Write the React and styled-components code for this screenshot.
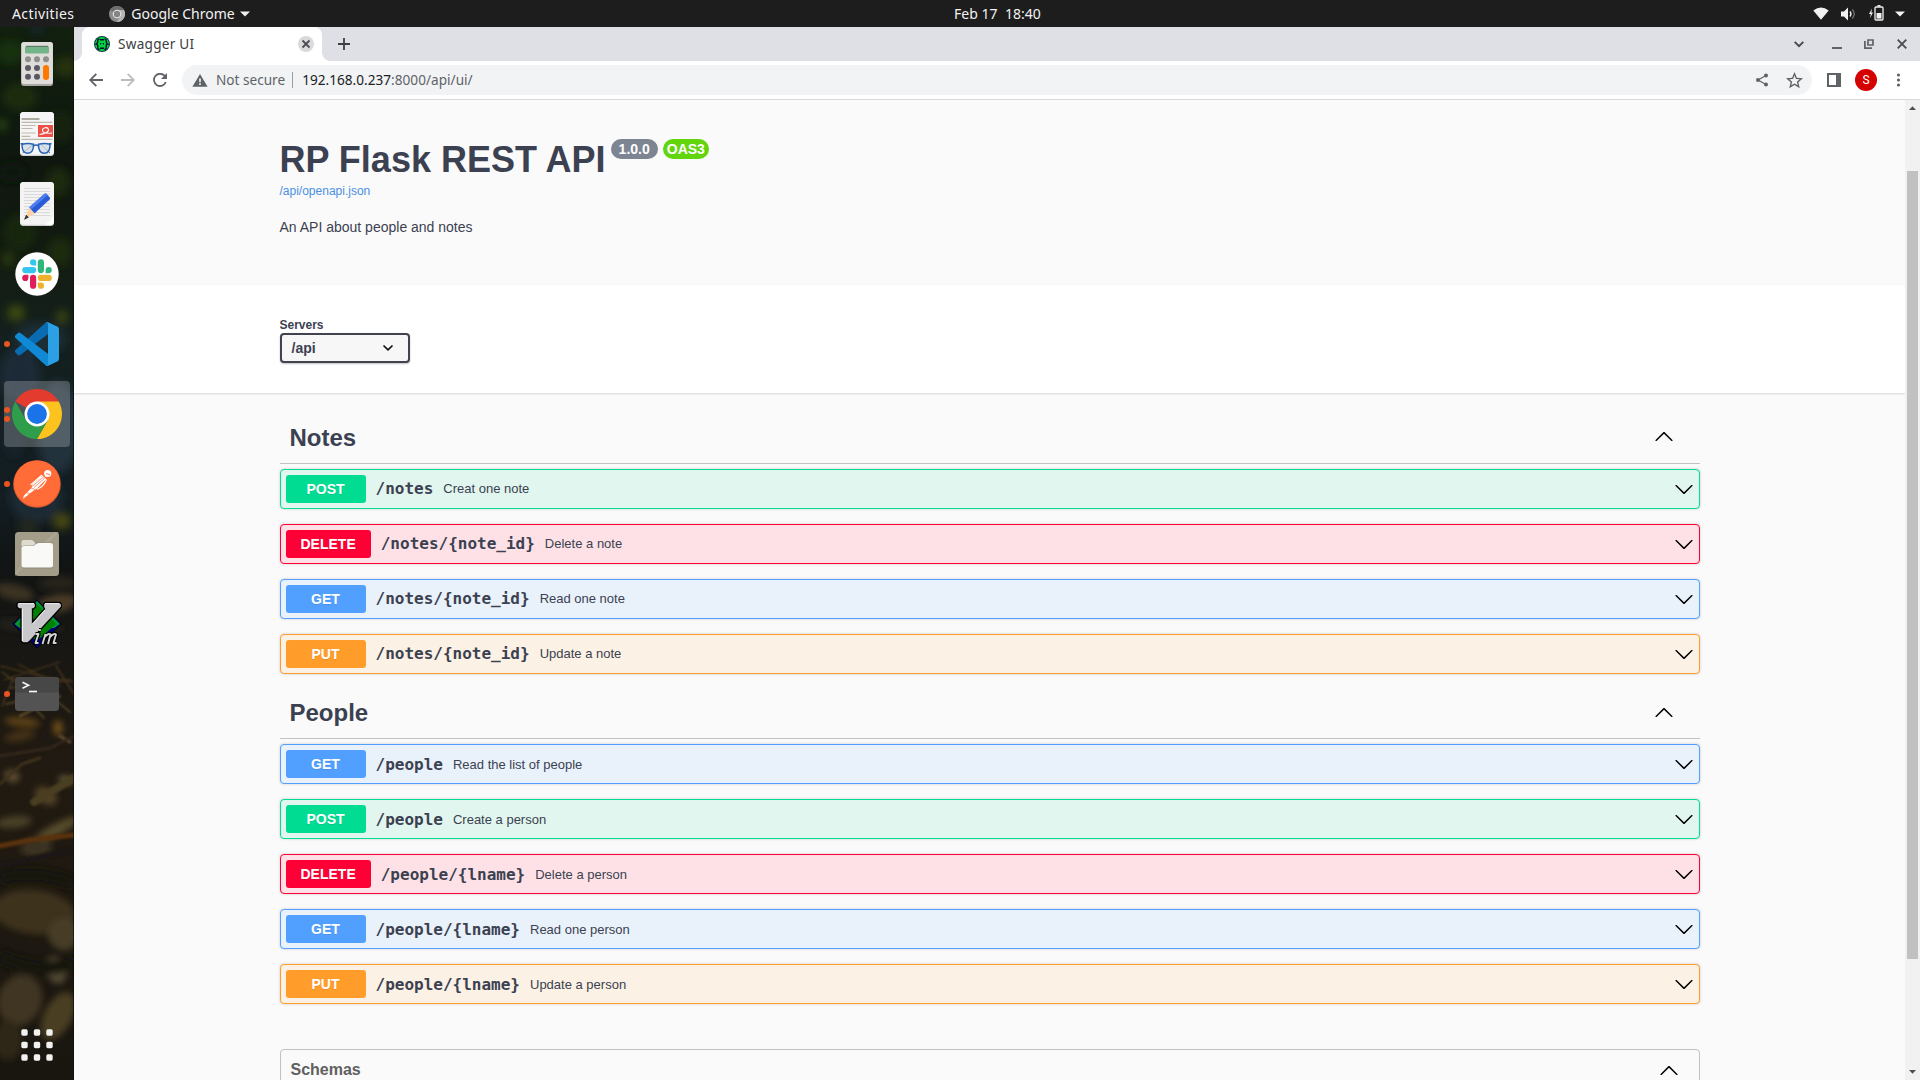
import React from 'react';
import styled, { createGlobalStyle, css } from 'styled-components';

const GlobalStyle = createGlobalStyle`
  * { box-sizing: border-box; }
  html, body { margin: 0; padding: 0; overflow: hidden; }
  body { font-family: "Liberation Sans", Arial, sans-serif; color: #3b4151; }
`;

const uiFont = css`font-family: "Noto Sans", "Open Sans", sans-serif;`;

const Screen = styled.div`
  width: 1920px;
  height: 1080px;
  display: flex;
  flex-direction: column;
  overflow: hidden;
  background: #fafafa;
`;

/* ---------- desktop top bar ---------- */
const TopBar = styled.header`
  height: 27px;
  flex: none;
  display: grid;
  grid-template-columns: 942px auto 1fr;
  align-items: center;
  background: #1d1d1d;
  color: #f2f2f2;
  padding: 0 15px 0 12px;
  ${uiFont}
  font-size: 14px;
  line-height: 26px;
  white-space: pre;
`;
const BarGroup = styled.div`
  display: flex;
  align-items: center;
  justify-content: ${p => (p.$end ? 'flex-end' : 'flex-start')};
`;
const BarText = styled.span`
  letter-spacing: ${p => p.$ls || 0}px;
  margin-left: ${p => p.$ml || 0}px;
`;
const Glyph = styled.svg`
  display: block;
  flex: none;
  margin-left: ${p => p.$ml || 0}px;
  margin-top: ${p => p.$mt || 0}px;
  margin-bottom: ${p => p.$mb || 0}px;
`;

const Desktop = styled.div`
  flex: 1;
  min-height: 0;
  display: flex;
`;

/* ---------- dock ---------- */
const Dock = styled.nav`
  position: relative;
  width: 74px;
  flex: none;
  display: flex;
  flex-direction: column;
  align-items: center;
  gap: 4px;
  padding: 4px 0 2px;
  background: #15180f;
  overflow: hidden;
`;
const Wallpaper = styled.svg`
  position: absolute;
  inset: 0;
`;
const DockItem = styled.div`
  position: relative;
  width: 66px;
  height: 66px;
  flex: none;
  display: flex;
  align-items: center;
  justify-content: center;
  border-radius: 4px;
  background: ${p => (p.$active ? 'rgba(255,255,255,0.22)' : 'transparent')};
  margin-top: ${p => (p.$last ? 'auto' : 0)};
`;
const Running = styled.div`
  position: absolute;
  left: 0;
  top: 0;
  bottom: 0;
  display: flex;
  flex-direction: column;
  justify-content: center;
  gap: 3px;
`;
const RunDot = styled.i`
  width: 6px;
  height: 6px;
  border-radius: 50%;
  background: #e95420;
`;

/* ---------- browser chrome ---------- */
const Browser = styled.main`
  flex: 1;
  min-width: 0;
  display: flex;
  flex-direction: column;
`;
const TabStrip = styled.div`
  height: 34px;
  flex: none;
  display: flex;
  align-items: center;
  background: #dee0e5;
  padding: 0 13px 0 8px;
`;
const Tab = styled.div`
  position: relative;
  width: 240px;
  height: 34px;
  display: flex;
  align-items: center;
  background: #fff;
  border-radius: 8px 8px 0 0;
  padding: 0 8px 0 12px;
  &::before, &::after {
    content: "";
    position: absolute;
    bottom: 0;
    width: 8px;
    height: 8px;
  }
  &::before { left: -8px; background: radial-gradient(circle at 0 0, #dee0e5 7.5px, #fff 8px); }
  &::after { right: -8px; background: radial-gradient(circle at 100% 0, #dee0e5 7.5px, #fff 8px); }
`;
const TabTitle = styled.span`
  flex: 1;
  margin-left: 8px;
  padding-bottom: 2px;
  ${uiFont}
  font-size: 13.6px;
  letter-spacing: ${p => p.$ls || 0}px;
  color: #3c4043;
`;
const CloseButton = styled.span`
  width: 16px;
  height: 16px;
  border-radius: 50%;
  background: #dadada;
  display: flex;
`;
const Spacer = styled.div`flex: 1;`;

const Toolbar = styled.div`
  height: 39px;
  flex: none;
  display: flex;
  align-items: center;
  background: #fff;
  border-bottom: 1px solid #d8dade;
  padding: 0 12px 0 10px;
`;
const NavButton = styled.span`
  width: 24px;
  height: 24px;
  margin-right: 8px;
  display: flex;
  align-items: center;
  justify-content: center;
`;
const Omnibox = styled.div`
  flex: 1;
  height: 30px;
  margin-left: 2px;
  border-radius: 15px;
  background: #f1f3f4;
  display: flex;
  align-items: center;
  padding: 0 8px 0 10px;
  ${uiFont}
  font-size: 13.6px;
  color: #5f6368;
`;
const Divider = styled.span`
  width: 1px;
  height: 16px;
  background: #9a9da1;
  margin: 0 9px 0 7px;
`;
const Url = styled.span`
  letter-spacing: ${p => p.$ls || 0}px;
  padding-bottom: 2px;
  b { font-weight: 400; color: #202124; }
`;
const Warn = styled.span`
  padding-bottom: 2px;
  margin-left: 8px;
`;
const Avatar = styled.span`
  width: 22px;
  height: 22px;
  border-radius: 50%;
  margin-left: 14px;
  background: #d50000;
  color: #fff;
  font-family: Roboto, sans-serif;
  font-size: 12px;
  line-height: 22px;
  text-align: center;
`;

/* ---------- page ---------- */
const Viewport = styled.div`
  flex: 1;
  min-height: 0;
  display: flex;
`;
const Page = styled.div`
  flex: 1;
  overflow: hidden;
  background: #fafafa;
`;
const Wrapper = styled.div`
  width: 1460px;
  margin: 0 auto;
  padding: 0 20px;
`;
const Info = styled.section`
  height: 185px;
  padding-top: 38px;
`;
const TitleRow = styled.div`
  display: flex;
  align-items: flex-start;
  height: 44px;
`;
const Title = styled.h2`
  margin: 0;
  font-size: 36px;
  line-height: 44px;
  font-weight: 700;
  color: #3b4151;
`;
const Badge = styled.span`
  margin: 1px 0 0 5px;
  height: 20px;
  line-height: 20px;
  padding: 0 ${p => p.$px}px;
  border-radius: 10px;
  background: ${p => p.$bg};
  color: #fff;
  font-size: 14px;
  font-weight: 700;
`;
const SpecLink = styled.a`
  display: block;
  font-size: 12px;
  line-height: 18px;
  color: #4990e2;
`;
const Description = styled.p`
  margin: 18px 0 0;
  font-size: 14px;
  line-height: 18px;
  color: #3b4151;
`;
const SchemeBar = styled.section`
  position: relative;
  height: 108px;
  padding-top: 33px;
  background: #fff;
  box-shadow: 0 1px 2px 0 rgba(0, 0, 0, 0.15);
`;
const ServersLabel = styled.label`
  display: block;
  font-size: 12px;
  font-weight: 700;
  line-height: 15px;
`;
const Select = styled.div`
  width: 130px;
  height: 30px;
  display: flex;
  align-items: center;
  justify-content: space-between;
  padding: 0 14px 0 10px;
  border: 2px solid #41444e;
  border-radius: 4px;
  background: #f7f7f7;
  box-shadow: 0 1px 2px 0 rgba(0, 0, 0, 0.25);
  font-size: 14px;
  font-weight: 700;
`;
const Operations = styled.div`padding-top: 21px;`;
const TagHeader = styled.h3`
  height: 50px;
  margin: 0 0 5px;
  padding: 0 26px 2px 10px;
  display: flex;
  align-items: center;
  justify-content: space-between;
  border-bottom: 1px solid rgba(59, 65, 81, 0.3);
  font-size: 24px;
  font-weight: 700;
`;
const OpRow = styled.div`
  height: 40px;
  margin-bottom: 15px;
  display: flex;
  align-items: center;
  padding: 0 5px;
  border: 1px solid ${p => p.$c};
  border-radius: 4px;
  background: ${p => p.$bg};
  box-shadow: 0 0 3px rgba(0, 0, 0, 0.19);
`;
const Method = styled.span`
  min-width: 80px;
  height: 28px;
  line-height: 28px;
  padding: 0 15px;
  border-radius: 3px;
  background: ${p => p.$c};
  color: #fff;
  font-size: 14px;
  font-weight: 700;
  text-align: center;
  text-shadow: 0 1px 0 rgba(0, 0, 0, 0.1);
`;
const Path = styled.span`
  padding: 0 10px ${p => p.$lift}px;
  font-family: "DejaVu Sans Mono", monospace;
  font-size: 16px;
  font-weight: 700;
`;
const Summary = styled.span`
  flex: 1;
  padding-bottom: ${p => p.$lift}px;
  font-size: 13px;
`;
const Schemas = styled.section`
  height: 60px;
  margin-top: 45px;
  padding: 10px 20px 0 10px;
  display: flex;
  align-items: flex-start;
  justify-content: space-between;
  border: 1px solid rgba(59, 65, 81, 0.3);
  border-radius: 4px;
`;
const SchemasTitle = styled.h4`
  margin: 0;
  font-size: 16px;
  line-height: 20px;
  color: #606060;
`;
const Scrollbar = styled.div`
  width: 15px;
  flex: none;
  display: flex;
  flex-direction: column;
  align-items: center;
  justify-content: space-between;
  background: #f1f1f1;
`;
const Thumb = styled.div`
  width: 11px;
  height: 788px;
  margin: 61px 0 auto;
  background: #c1c1c1;
`;

/* ---------- drawings ---------- */
const Chevron = ({ up, mt }) => (
  <Glyph width="20" height="20" viewBox="0 0 20 20" $mt={mt}>
    <path d={up
      ? 'M17.418 14.908c.272.268.709.268.979 0s.271-.701 0-.969l-7.908-7.83c-.27-.268-.707-.268-.979 0l-7.908 7.83c-.27.268-.27.701 0 .969s.709.268.979 0L10 7.767z'
      : 'M17.418 6.109c.272-.268.709-.268.979 0s.271.701 0 .969l-7.908 7.83c-.27.268-.707.268-.979 0l-7.908-7.83c-.27-.268-.27-.701 0-.969s.709-.268.979 0L10 13.25z'} />
  </Glyph>
);

const leaves = [
  [37, 2, 8, 3, '#16283d'], [10, 25, 14, 12, '#17300f'], [66, 40, 12, 10, '#26330d'], [20, 70, 18, 14, '#1a2c10'],
  [2, 98, 5, 6, '#274a12'], [60, 100, 14, 16, '#15220f'], [12, 145, 14, 10, '#10180d'], [58, 155, 12, 14, '#1b2a10'],
  [20, 205, 16, 18, '#182610'], [60, 225, 12, 14, '#1f2c10'], [8, 232, 6, 8, '#28380e'], [16, 286, 9, 8, '#3d4a10'],
  [62, 290, 6, 7, '#3a4410'], [40, 312, 26, 16, '#1c2d35'], [20, 350, 20, 30, '#1c2c37'], [58, 400, 22, 46, '#22333e'],
  [14, 400, 12, 30, '#16222b'], [36, 470, 26, 26, '#1d2c35'], [62, 494, 9, 8, '#4a4a10'], [28, 500, 10, 10, '#20261a'],
  [58, 556, 20, 6, '#2c261c'],
];
const ground = [
  [14, 592, 20, 8, '#3b3021', 12], [56, 604, 22, 9, '#493a28', -12], [30, 626, 34, 6, '#22231c', 5],
  [22, 722, 18, 5, '#5a4018', 6], [58, 728, 5, 8, '#6a4c18', 0], [20, 736, 16, 5, '#453117', -10],
  [12, 776, 8, 6, '#5c4b30', 20], [46, 796, 12, 8, '#514226', 30], [66, 780, 8, 4, '#65583c', 10],
  [14, 822, 18, 6, '#4a4028', -6], [56, 830, 26, 6, '#564b2c', -28], [36, 848, 16, 10, '#3b3320', 0],
  [34, 912, 42, 22, '#3e331f', 6], [64, 934, 16, 16, '#473d26', 0], [20, 1000, 22, 26, '#3f3420', 20],
  [56, 970, 10, 14, '#524a32', -20], [58, 1016, 14, 26, '#4a3d20', 28], [8, 1040, 14, 20, '#2f2818', 0],
];
const twigs = [
  ['M0 666L40 676L74 682', '#54401f', 1], ['M4 680L60 662', '#3d2f1c', 1.4], ['M18 664L60 686', '#6a4a20', 0.8],
  ['M2 672L34 696', '#51401f', 1.5], ['M10 688L70 680', '#4b3820', 1.6], ['M6 704L48 694L70 712', '#5e4b2c', 1.6],
  ['M20 716L60 696', '#65502f', 2], ['M14 676L2 706', '#4f3c22', 1.2], ['M56 666L74 694', '#463620', 1.5],
  ['M30 704L44 718', '#5d4a2c', 1.5], ['M60 736L70 742', '#5b4c32', 3], ['M0 756L50 748L74 736', '#34271a', 3],
  ['M34 802L74 778', '#4a3c20', 8], ['M0 866L74 850', '#1a1712', 6], ['M0 846L30 840L74 835', '#5a300a', 5],
  ['M0 784L22 764L40 758', '#40331c', 3],
];
const DockWallpaper = () => (
  <Wallpaper width="74" height="1053" viewBox="0 0 74 1053">
    <defs>
      <linearGradient id="night" x1="0" y1="0" x2="0" y2="1">
        <stop offset="0" stopColor="#12200f" />
        <stop offset=".13" stopColor="#0f170f" />
        <stop offset=".22" stopColor="#131c11" />
        <stop offset=".3" stopColor="#14201f" />
        <stop offset=".45" stopColor="#131d22" />
        <stop offset=".51" stopColor="#111414" />
        <stop offset=".6" stopColor="#191713" />
        <stop offset=".72" stopColor="#211a11" />
        <stop offset="1" stopColor="#191610" />
      </linearGradient>
      <filter id="soft" x="-50%" y="-50%" width="200%" height="200%"><feGaussianBlur stdDeviation="4" /></filter>
      <filter id="near" x="-50%" y="-50%" width="200%" height="200%"><feGaussianBlur stdDeviation="3.4" /></filter>
      <filter id="fine" x="-10%" y="-10%" width="120%" height="120%"><feGaussianBlur stdDeviation=".9" /></filter>
    </defs>
    <rect width="74" height="1053" fill="url(#night)" />
    <g filter="url(#soft)">
      {leaves.map(([x, y, rx, ry, c], i) => <ellipse key={i} cx={x} cy={y} rx={rx} ry={ry} fill={c} />)}
    </g>
    <g transform="translate(0 -27)">
      <g filter="url(#near)">
        {ground.map(([x, y, rx, ry, c, r], i) => (
          <ellipse key={i} cx={x} cy={y} rx={rx} ry={ry} fill={c} transform={`rotate(${r} ${x} ${y})`} />
        ))}
        <path d="M0 878Q40 870 74 884M0 956Q40 976 74 962" stroke="#13120f" strokeWidth="14" fill="none" />
      </g>
      <g filter="url(#fine)" fill="none">
        {twigs.map(([d, c, w], i) => <path key={i} d={d} stroke={c} strokeWidth={w} strokeLinecap="round" />)}
      </g>
    </g>
    <path d="M73.5 0V1053" stroke="#0c0d0a" strokeOpacity=".7" />
  </Wallpaper>
);

const Calculator = () => (
  <svg width="34" height="46" viewBox="0 0 34 46">
    <rect x="1.300" y="1.500" width="31.600" height="43.500" rx="2.500" fill="#aaa7a2" />
    <rect x="1.300" y="1" width="31.600" height="42" rx="2.500" fill="#deddda" />
    <rect x="5" y="5" width="24" height="7.500" rx="1.500" fill="#73b488" />
    <path d="M6 5.300h22" stroke="#5b6f62" />
    <g fill="#8f8e8c"><circle cx="8" cy="18.300" r="3" /><circle cx="17" cy="18.300" r="3" /><circle cx="26" cy="18.300" r="3" /></g>
    <g fill="#5b5866"><circle cx="8" cy="27" r="3" /><circle cx="17" cy="27" r="3" /><circle cx="8" cy="35.700" r="3" /><circle cx="17" cy="35.700" r="3" /></g>
    <rect x="23" y="24" width="6" height="15" rx="3" fill="#ff7800" />
  </svg>
);
const DocumentViewer = () => (
  <svg width="34" height="44" viewBox="0 0 34 44">
    <rect width="34" height="44" rx="3.500" fill="#d2d2d2" />
    <rect width="34" height="42.800" rx="3.500" fill="#f5f5f5" />
    <path d="M1.500 7h18" stroke="#9b978a" strokeWidth="1.600" />
    <path d="M1.500 10.300h31M1.500 13.500h14M1.500 16.500h11M1.500 21h14M1.500 24.300h9M1.500 27.300h31" stroke="#bdb9ab" strokeWidth="1.200" />
    <rect x="18" y="13" width="15" height="12" fill="#ed5044" />
    <path d="M19.500 22.500c3-.5 9.500-2 9-5s-6.500-2-6 1 5 3 9.500 2.500" stroke="#fff" strokeWidth="1.100" fill="none" />
    <path d="M2.500 41l11-8.500M30 41l-9-8.500" stroke="#454b52" strokeWidth=".8" />
    <g fill="#c9d9e6" fillOpacity=".7" stroke="#2b63b4" strokeWidth="1.500">
      <path d="M2 32.300q6-1.500 11.500 0 .3 8.700-5.700 8.900T2 32.300zM18.500 32.300q6-1.500 11.500 0 .3 8.900-5.700 8.900t-5.800-8.900z" />
      <path d="M.6 31.800h3M13.500 34q2.500-1.800 5 0M29 31.800h2.500" fill="none" />
    </g>
  </svg>
);
const TextEditor = () => (
  <svg width="34" height="44" viewBox="0 0 34 44">
    <rect width="34" height="44" rx="3.500" fill="#cdcdcd" />
    <rect width="34" height="42.800" rx="3.500" fill="#f3f3f3" />
    <path d="M4 6.500h26M4 9.500h26M4 12.500h26M4 15.500h26M4 18.500h26M4 21.500h26M4 24.500h26M4 27.500h26M4 30.500h26M4 33.500h26" stroke="#dadada" />
    <path d="M24.500 11.800q1-.8 2 0l3.300 3.800q.6 1-.2 1.900L14.500 31.500l-5.500-6z" fill="#2a5bd7" />
    <path d="M24.500 11.800q1-.8 2 0l1.200 1.400L11 27.500l-2-2z" fill="#4b7ff0" />
    <path d="M9 25.500l5.500 6-10 6.300z" fill="#ffd0a6" />
    <path d="M6.200 32.800l2.600 2.600-4.800 2.300z" fill="#303030" />
    <path d="M33.500 33q-2 6-9 9.700h6.200q2.800-.2 2.800-3z" fill="#fff" />
  </svg>
);
const Slack = () => (
  <svg width="44" height="44" viewBox="0 0 44 44">
    <circle cx="22" cy="22" r="21.700" fill="#fff" />
    <g fill="#36c5f0"><path d="M21.200 13.400h-3.100a3.100 3.100 0 1 1 3.100-3.100z" /><rect x="7.200" y="15" width="14" height="6.200" rx="3.100" /></g>
    <g fill="#2eb67d"><path d="M30.600 21.200v-3.100a3.100 3.100 0 1 1 3.100 3.100z" /><rect x="22.800" y="7.200" width="6.200" height="14" rx="3.100" /></g>
    <g fill="#ecb22e"><path d="M22.800 30.600h3.100a3.100 3.100 0 1 1-3.100 3.100z" /><rect x="22.800" y="22.800" width="14" height="6.200" rx="3.100" /></g>
    <g fill="#e01e5a"><path d="M13.400 22.800v3.100a3.100 3.100 0 1 1-3.100-3.100z" /><rect x="15" y="22.800" width="6.200" height="14" rx="3.100" /></g>
  </svg>
);
const VSCode = () => (
  <svg width="44" height="44" viewBox="0 0 100 100">
    <path d="M96.460 10.796L75.857.876a6.230 6.230 0 0 0-7.107 1.207L1.300 63.583a4.167 4.167 0 0 0 .004 6.162l5.510 5.009a4.167 4.167 0 0 0 5.320.236l81.228-61.620c2.725-2.067 6.639-.124 6.639 3.297v-.240a6.250 6.250 0 0 0-3.540-5.630z" fill="#0a6cb0" />
    <path d="M96.460 89.204l-20.603 9.920a6.230 6.230 0 0 1-7.107-1.207L1.300 36.417a4.167 4.167 0 0 1 .004-6.162l5.510-5.009a4.167 4.167 0 0 1 5.320-.236l81.228 61.620c2.725 2.067 6.639.124 6.639-3.297v.240a6.250 6.250 0 0 1-3.540 5.630z" fill="#108ad4" />
    <path d="M75.858 99.126a6.232 6.232 0 0 1-7.108-1.210c2.306 2.307 6.250.674 6.250-2.588V4.672c0-3.262-3.944-4.895-6.250-2.589a6.232 6.232 0 0 1 7.108-1.210l20.600 9.908A6.250 6.250 0 0 1 100 16.413v67.174a6.250 6.250 0 0 1-3.541 5.633z" fill="#2ba0e4" />
  </svg>
);
const Chrome = () => (
  <svg width="50" height="50" viewBox="0 0 50 50">
    <path d="M25 25L3.350 12.500A25 25 0 0 1 46.650 12.500z" fill="#e33b2e" />
    <path d="M25 12.500H46.650A25 25 0 0 1 25 50L35.800 31.300z" fill="#fcc31e" />
    <path d="M35.800 31.300L25 50A25 25 0 0 1 3.350 12.500L14.200 31.300z" fill="#2f9e4b" />
    <circle cx="25" cy="25" r="12.500" fill="#fff" />
    <circle cx="25" cy="25" r="9.900" fill="#1a73e8" />
  </svg>
);
const Postman = () => (
  <svg width="48" height="48" viewBox="0 0 48 48">
    <circle cx="24" cy="24" r="23.800" fill="#e05a2b" /><circle cx="24" cy="23.500" r="23" fill="#ff6c37" />
    <circle cx="34.700" cy="13.500" r="3.600" fill="#fff" />
    <path d="M33 13.500l4 1.200" stroke="#ff6c37" strokeWidth=".9" />
    <path d="M29.500 15.500l3.800 3.500-9.300 9.500-4 2.500-9.500 7.500H10l1-3 7.500-7.500 1-4z" fill="#fff" />
    <path d="M19 26.500L31 16.500M21 27.500l11-9.500M18 28l4 1.500M14 33l3 .5" stroke="#ff6c37" strokeWidth=".7" />
    <path d="M17.500 25L29 15M24 29.500q7-3 9.500-10" stroke="#fff" strokeWidth="1.100" fill="none" />
  </svg>
);
const Files = () => (
  <svg width="44" height="44" viewBox="0 0 44 44">
    <rect width="44" height="44" rx="3.500" fill="#a29c89" />
    <path d="M44 0L0 44V40L40 0z" fill="#b1ab98" opacity=".6" />
    <path d="M6.500 14v-3.500q0-2.500 2.500-2.500h7q2 0 3 1.500l2 3h14.500v6z" fill="#dfdccf" />
    <path d="M6.500 16q0-2.500 2.500-2.500h8q2 0 3.500-2t3-1h12q2.500 0 2.500 2.500V34q0 2.500-2.500 2.500H9q-2.500 0-2.500-2.500z" fill="#8a8473" opacity=".7" />
    <path d="M6.500 16q0-2 2.500-2h8q2 0 3.500-1.500t3-1.500h12q2.500 0 2.500 2.500V33q0 2.500-2.500 2.500H9q-2.500 0-2.500-2.500z" fill="#f9f9f8" />
  </svg>
);
const Vim = () => (
  <svg width="50" height="50" viewBox="0 0 50 50">
    <path d="M25 .8L49.200 25 25 49.200.8 25z" fill="#00007a" stroke="#000" />
    <path d="M25 2L48 25 42 29H25v13L2.500 25z" fill="#019833" />
    <path d="M25 5L44 25 25 42 6 25z" fill="#008000" />
    <path d="M6 3.500h16l1.500 1.500v3l-2 2h-1v13L32.500 10 31.500 8V5L33 3.500H48L49.500 5v3L18 42l-2.500 2H11l-2-2V10H7L5 8V5z" fill="#c8c7ca" stroke="#000" strokeWidth="1.300" />
    <path d="M6.500 4.600h15.500M33 4.600H47M10.500 10v32M20.500 25L33 11" stroke="#efeff1" strokeWidth="1" fill="none" />
    <g fill="none" stroke="#000" strokeWidth="4.200" strokeLinejoin="round"><path d="M23.500 35h3l-3 9h3M27 31h1.800M30.500 45l3-10M32.500 38q4.500-4.500 6-2.500L36 45M38 38q4.500-4.500 6-2.500L41.500 44h3" /></g>
    <g fill="none" stroke="#d4d4d6" strokeWidth="1.900" strokeLinejoin="round"><path d="M23.500 35h3l-3 9h3M27 31h1.800M30.500 45l3-10M32.500 38q4.500-4.500 6-2.500L36 45M38 38q4.500-4.500 6-2.500L41.500 44h3" /></g>
  </svg>
);
const Terminal = () => (
  <svg width="44" height="34" viewBox="0 0 44 34">
    <rect width="44" height="34" rx="3.500" fill="#535353" />
    <path d="M3.500 0h37Q44 0 44 3.500V15.500H0V3.500Q0 0 3.500 0z" fill="#474747" />
    <path d="M7.500 5.300l6 3-6 3" stroke="#f4f4f4" strokeWidth="1.700" fill="none" /><path d="M14 14.500h8" stroke="#fff" strokeWidth="1.600" />
  </svg>
);
const AppGrid = () => (
  <svg width="32" height="32" viewBox="0 0 32 32" fill="#f2f2f0">
    {[0, 12.5, 25].map(y => [0, 12.5, 25].map(x => <rect key={`${x}-${y}`} x={x + 0.3} y={y + 0.3} width="6.400" height="6.400" rx="1.600" />))}
  </svg>
);

const dockApps = [
  [Calculator, 0], [DocumentViewer, 0], [TextEditor, 0], [Slack, 0], [VSCode, 1],
  [Chrome, 2], [Postman, 1], [Files, 0], [Vim, 0], [Terminal, 1],
];

const methods = {
  POST: ['#00dc91', '#e1f6ee'],
  DELETE: ['#ff0036', '#fde1e6'],
  GET: ['#519fff', '#e9f1fb'],
  PUT: ['#ff9c2a', '#fbf1e4'],
};
const tags = [
  { name: 'Notes', lift: 2, chevron: -3, ops: [
    ['POST', '/notes', 'Creat one note'],
    ['DELETE', '/notes/{note_id}', 'Delete a note'],
    ['GET', '/notes/{note_id}', 'Read one note'],
    ['PUT', '/notes/{note_id}', 'Update a note'],
  ] },
  { name: 'People', lift: 0, chevron: -1, ops: [
    ['GET', '/people', 'Read the list of people'],
    ['POST', '/people', 'Create a person'],
    ['DELETE', '/people/{lname}', 'Delete a person'],
    ['GET', '/people/{lname}', 'Read one person'],
    ['PUT', '/people/{lname}', 'Update a person'],
  ] },
];

const Cross = ({ s, w }) => <path d={`M${-s} ${-s}L${s} ${s}M${s} ${-s}L${-s} ${s}`} stroke="#4a4d51" strokeWidth={w} />;

export default function App() {
  return (
    <Screen>
      <GlobalStyle />
      <TopBar>
        <BarGroup>
          <BarText $ls={0.4}>Activities</BarText>
          <Glyph width="16" height="16" viewBox="0 0 16 16" $ml={35}>
            <circle cx="8" cy="8" r="8" fill="#8c8c8c" />
            <path d="M8 8L1.100 4A8 8 0 0 1 15 4z" fill="#6d6d6d" />
            <path d="M8 4H15A8 8 0 0 1 8 16L11.500 10z" fill="#b5b5b5" />
            <circle cx="8" cy="8" r="4.300" fill="#e6e6e6" /><circle cx="8" cy="8" r="3.200" fill="#858585" />
          </Glyph>
          <BarText $ml={6}>Google Chrome</BarText>
          <Glyph width="10" height="6" viewBox="0 0 10 6" $ml={5}><path d="M0 .5h10L5 5.500z" fill="#f2f2f2" /></Glyph>
        </BarGroup>
        <BarText $ls={0.03}>{'Feb 17  18:40'}</BarText>
        <BarGroup $end>
          <Glyph width="16" height="13" viewBox="0 0 16 13"><path d="M.3 3.500Q8-2.500 15.700 3.500L8 12.700z" fill="#f2f2f2" /></Glyph>
          <Glyph width="15" height="14" viewBox="0 0 15 14" $ml={12}>
            <path d="M0 4.500h3L7 .5v13l-4-4H0z" fill="#f2f2f2" />
            <path d="M9 4.500q2 2.500 0 5" stroke="#f2f2f2" strokeWidth="1.300" fill="none" />
            <path d="M11.300 2.500q4 4.500 0 9" stroke="#777" strokeWidth="1.200" fill="none" />
          </Glyph>
          <Glyph width="15" height="16" viewBox="0 0 15 16" $ml={13} $mb={1}>
            <path d="M3 3.500L0 9h1.800L1 13l3-5.500H2.300z" fill="#f2f2f2" />
            <path d="M8.500 0h3v1.500h-3z" fill="#f2f2f2" />
            <rect x="6" y="2" width="8" height="13" rx="1" fill="none" stroke="#f2f2f2" strokeWidth="1.300" />
            <rect x="7.500" y="8" width="5" height="5.600" fill="#f2f2f2" />
          </Glyph>
          <Glyph width="10" height="6" viewBox="0 0 10 6" $ml={11}><path d="M0 .5h10L5 5.500z" fill="#f2f2f2" /></Glyph>
        </BarGroup>
      </TopBar>
      <Desktop>
        <Dock>
          <DockWallpaper />
          {dockApps.map(([Icon, dots], i) => (
            <DockItem key={i} $active={Icon === Chrome}>
              <Running>{Array.from({ length: dots }, (_, k) => <RunDot key={k} />)}</Running>
              <Icon />
            </DockItem>
          ))}
          <DockItem $last><AppGrid /></DockItem>
        </Dock>
        <Browser>
          <TabStrip>
            <Tab>
              <Glyph width="16" height="16" viewBox="0 0 16 16">
                <circle cx="8" cy="8" r="8" fill="#173647" /><circle cx="8" cy="8" r="7" fill="#00d63a" />
                <path d="M5.500 3Q3.800 3 3.800 5T2.500 8Q3.800 8 3.800 11T5.500 13M10.500 3q1.700 0 1.700 2t1.300 3q-1.300 0-1.300 3t-1.700 2" stroke="#07103a" strokeWidth="1.500" fill="none" />
                <path d="M6 3h4v1.500H6zM6 7h1.200v1.500H6zM8.800 7H10v1.500H8.800zM6 11.500h4V13H6z" fill="#07103a" />
              </Glyph>
              <TabTitle $ls={0.25}>Swagger UI</TabTitle>
              <CloseButton><svg width="16" height="16" viewBox="-8 -8 16 16"><Cross s={3.5} w={1.8} /></svg></CloseButton>
            </Tab>
            <Glyph width="12" height="12" viewBox="0 0 12 12" $ml={16}><path d="M6 0v12M0 6h12" stroke="#3c4043" strokeWidth="1.800" /></Glyph>
            <Spacer />
            <Glyph width="10" height="7" viewBox="0 0 10 7"><path d="M.7.8L5 5.200 9.300.8" fill="none" stroke="#46494d" strokeWidth="1.900" /></Glyph>
            <Glyph width="10" height="10" viewBox="0 0 10 10" $ml={28}><path d="M0 9h10" stroke="#5f6368" strokeWidth="2" /></Glyph>
            <Glyph width="10" height="10" viewBox="0 0 10 10" $ml={22}><path d="M4 1h5v5H4z" fill="none" stroke="#5f6368" strokeWidth="1.700" /><path d="M.9 2v7.100H8" fill="none" stroke="#5f6368" strokeWidth="1.800" /></Glyph>
            <Glyph width="10" height="10" viewBox="-5 -5 10 10" $ml={23}><Cross s={4.3} w={1.9} /></Glyph>
          </TabStrip>
          <Toolbar>
            <NavButton><svg width="14" height="14" viewBox="0 0 14 14"><path d="M14 7H1.500M7.300 .8L1.200 7l6.100 6.200" fill="none" stroke="#5f6368" strokeWidth="1.800" /></svg></NavButton>
            <NavButton><svg width="14" height="14" viewBox="0 0 14 14"><path d="M0 7h12.500M6.700 .8L12.800 7l-6.100 6.200" fill="none" stroke="#babcbe" strokeWidth="1.800" /></svg></NavButton>
            <NavButton><svg width="14" height="14" viewBox="0 0 14 14"><path d="M11.700 2.900A6.100 6.100 0 1 0 12.800 9" fill="none" stroke="#5f6368" strokeWidth="1.800" /><path d="M14 0v6H8z" fill="#5f6368" /></svg></NavButton>
            <Omnibox>
              <Glyph width="16" height="13" viewBox="0 0 16 13" $ml={0}>
                <path d="M8 0l7.600 12.700H.4z" fill="#5f6368" /><path d="M8 4.500v3.700M8 9.300v1.600" stroke="#fff" strokeWidth="1.500" />
              </Glyph>
              <Warn>Not secure</Warn>
              <Divider />
              <Url $ls={0.02}><b>192.168.0.237</b>:8000/api/ui/</Url>
              <Spacer />
              <Glyph width="12" height="14" viewBox="0 0 12 14">
                <path d="M10 2.500L2 7l8 4.500" stroke="#5f6368" strokeWidth="1.200" fill="none" />
                <g fill="#5f6368"><circle cx="10" cy="2.400" r="2" /><circle cx="2" cy="7" r="2" /><circle cx="10" cy="11.600" r="2" /></g>
              </Glyph>
              <Glyph width="17" height="17" viewBox="2 2 20 20" $ml={17.5}>
                <path d="M22 9.240l-7.190-.62L12 2 9.190 8.630 2 9.240l5.460 4.730L5.820 21 12 17.270 18.180 21l-1.630-7.030zM12 15.400l-3.760 2.270 1-4.280-3.320-2.880 4.380-.38L12 6.100l1.710 4.040 4.380.38-3.320 2.880 1 4.280z" fill="#5f6368" />
              </Glyph>
              <span style={{ width: 1.5 }} />
            </Omnibox>
            <Glyph width="14" height="14" viewBox="0 0 14 14" $ml={15}><rect x="1" y="1" width="12" height="12" fill="none" stroke="#5f6368" strokeWidth="2" /><path d="M9 1h4v12H9z" fill="#5f6368" /></Glyph>
            <Avatar>S</Avatar>
            <Glyph width="18" height="14" viewBox="0 0 18 14" $ml={13} fill="#5f6368"><circle cx="8.500" cy="2" r="1.600" /><circle cx="8.500" cy="7" r="1.600" /><circle cx="8.500" cy="12" r="1.600" /></Glyph>
          </Toolbar>
          <Viewport>
            <Page>
              <Wrapper>
                <Info>
                  <TitleRow>
                    <Title>RP Flask REST API</Title>
                    <Badge $bg="#7d8492" $px={8}>1.0.0</Badge>
                    <Badge $bg="#62d50d" $px={4}>OAS3</Badge>
                  </TitleRow>
                  <SpecLink>/api/openapi.json</SpecLink>
                  <Description>An API about people and notes</Description>
                </Info>
              </Wrapper>
              <SchemeBar>
                <Wrapper>
                  <ServersLabel>Servers</ServersLabel>
                  <Select>
                    /api
                    <svg width="12" height="8" viewBox="0 0 12 8"><path d="M1.500 1.500L6 5.800l4.500-4.300" fill="none" stroke="#111" strokeWidth="1.700" /></svg>
                  </Select>
                </Wrapper>
              </SchemeBar>
              <Wrapper>
                <Operations>
                  {tags.map(({ name, lift, chevron, ops }) => (
                    <React.Fragment key={name}>
                      <TagHeader>{name}<Chevron up mt={chevron} /></TagHeader>
                      {ops.map(([m, path, text]) => (
                        <OpRow key={m + path} $c={methods[m][0]} $bg={methods[m][1]}>
                          <Method $c={methods[m][0]}>{m}</Method>
                          <Path $lift={lift}>{path}</Path>
                          <Summary $lift={lift}>{text}</Summary>
                          <Chevron />
                        </OpRow>
                      ))}
                    </React.Fragment>
                  ))}
                </Operations>
                <Schemas><SchemasTitle>Schemas</SchemasTitle><Chevron up /></Schemas>
              </Wrapper>
            </Page>
            <Scrollbar>
              <Glyph width="7" height="4" viewBox="0 0 7 4" $mt={6}><path d="M0 4L3.500 .3 7 4z" fill="#505050" /></Glyph>
              <Thumb />
              <Glyph width="7" height="4" viewBox="0 0 7 4" $mb={6}><path d="M0 0h7L3.500 3.700z" fill="#505050" /></Glyph>
            </Scrollbar>
          </Viewport>
        </Browser>
      </Desktop>
    </Screen>
  );
}
